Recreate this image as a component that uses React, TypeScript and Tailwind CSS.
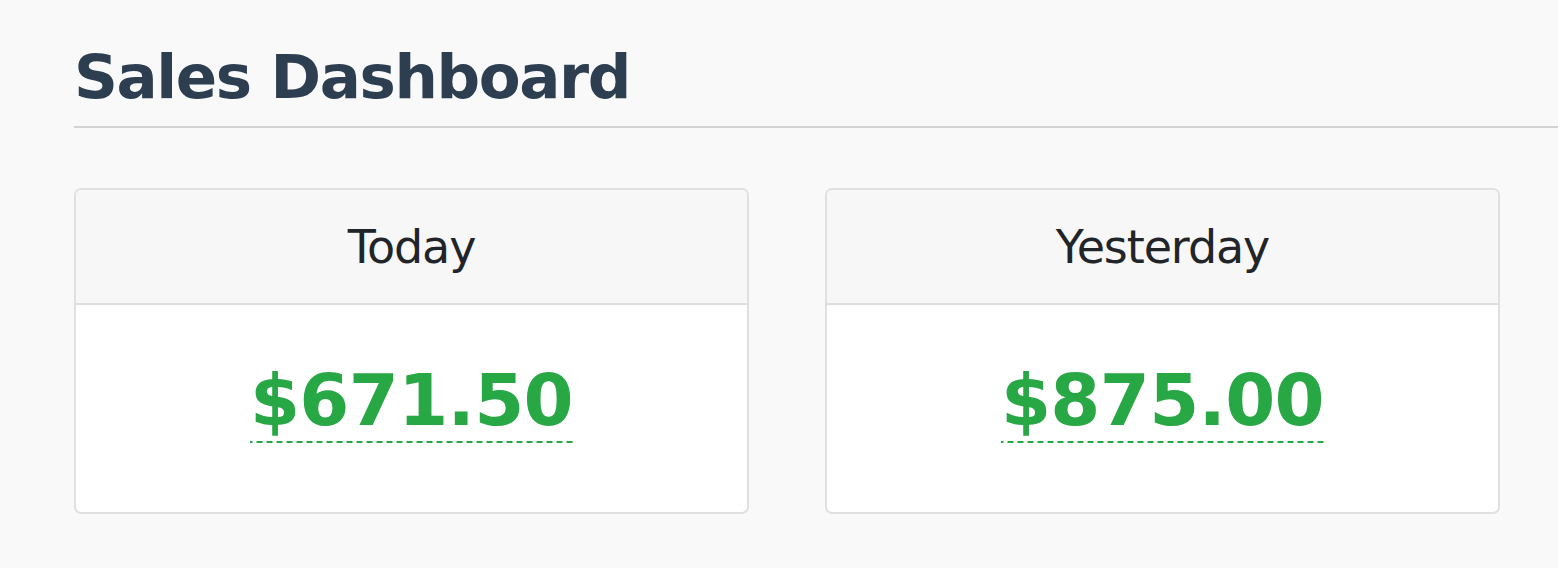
const cards = [
  { label: "Today", amount: "$671.50" },
  { label: "Yesterday", amount: "$875.00" },
];

const font = "font-['DejaVu_Sans','Verdana',sans-serif]";

export default function App() {
  return (
    <div className={`min-h-[568px] bg-[#f9f9f9] pl-[74px] pt-[46px] overflow-hidden ${font}`}>
      <h1 className="text-[61px] leading-none font-bold tracking-[-1.4px] text-[#2c3e50]">Sales Dashboard</h1>
      <hr className="mt-[19px] w-[1500px] border-0 border-t-2 border-[#d3d3d3]" />

      <div className="mt-[60px] flex gap-[76px]">
        {cards.map((c) => (
          <div
            key={c.label}
            className="w-[675px] h-[326px] flex flex-col rounded-[7px] border-2 border-[#e0e0e0] bg-white overflow-hidden"
          >
            <div className="h-[115px] flex items-center justify-center bg-[#f7f7f7] border-b-2 border-[#dedede]">
              <span className="text-[46px] leading-none tracking-[-1.1px] text-[#212529]">{c.label}</span>
            </div>
            <div className="flex-1 flex justify-center pt-[59px]">
              <span className="h-fit pb-[7px] text-[72px] leading-none font-bold tracking-[-0.7px] text-[#28a745] bg-[linear-gradient(to_right,#28a745_60%,transparent_60%)] bg-[length:10px_2px] bg-repeat-x bg-bottom">
                {c.amount}
              </span>
            </div>
          </div>
        ))}
      </div>
    </div>
  );
}
